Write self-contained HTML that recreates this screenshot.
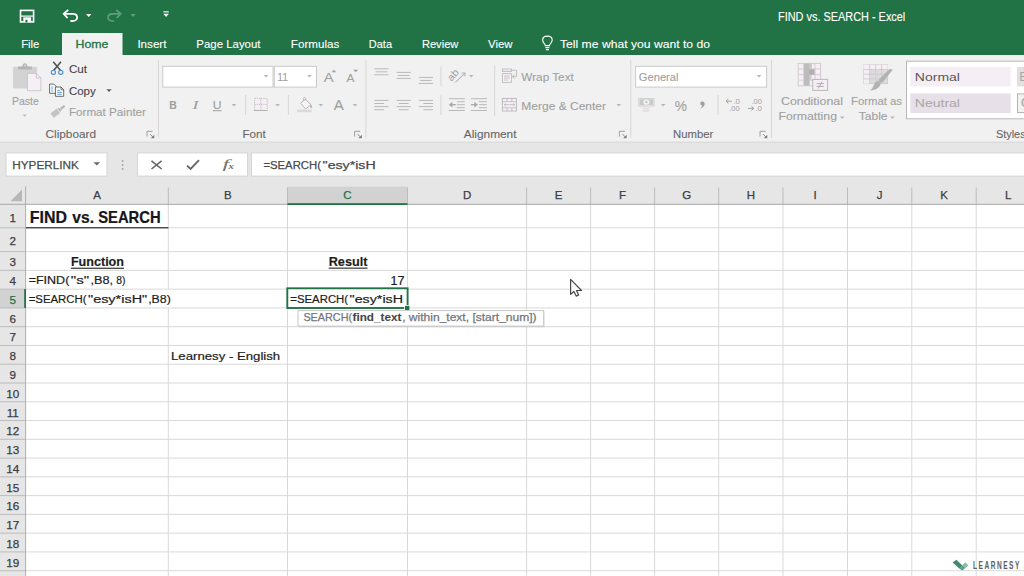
<!DOCTYPE html>
<html lang="en">
<head>
<meta charset="utf-8">
<title>FIND vs. SEARCH - Excel</title>
<style>
html,body{margin:0;padding:0;background:#fff;overflow:hidden}
body{width:1024px;height:576px;position:relative;font-family:"Liberation Sans", sans-serif;}
.layer{position:absolute;left:0;display:block;overflow:hidden}
svg text{font-family:"Liberation Sans", sans-serif;white-space:pre}
#titlebar{top:0;width:1024px;height:55px;background:#217346}
#ribbon{top:55px;width:1024px;height:88px;background:#f1f1f1}
#formulabar{top:143px;width:1024px;height:43px;background:#e6e6e6}
#sheet{top:186px;width:1024px;height:390px;background:#fff}
</style>
</head>
<body>
<div id="titlebar" class="layer">
<svg width="1024" height="55" viewBox="0 0 1024 55">
<rect x="62" y="33" width="60.5" height="23" fill="#f1f1f1"/>
<g fill="none" stroke="#ffffff" stroke-width="1.6"><rect x="20.5" y="10.4" width="13.1" height="11.5"/><path d="M20.5 16.1 H33.6" stroke-width="1.2"/></g><rect x="23.3" y="17.3" width="7.8" height="4.6" fill="#ffffff"/><rect x="25.4" y="19.8" width="2" height="2.6" fill="#217346"/>
<path d="M68.2 9.9 L63.7 13.9 L67.6 18 M64.2 13.9 H72.6 C78.6 13.9 78.8 21 72.6 21 H70.4" fill="none" stroke="#ffffff" stroke-width="1.8" stroke-linejoin="miter"/>
<path d="M86 14.1 H91.4 L88.7 17 Z" fill="#ffffff"/>
<path d="M116.2 9.9 L120.7 13.9 L116.8 18 M120.2 13.9 H112.6 C106.6 13.9 106.4 21 112.6 21 H114.2" fill="none" stroke="#5f9f7f" stroke-width="1.7"/>
<path d="M130.4 14.1 H135.7 L133.05 17 Z" fill="#5f9f7f"/>
<rect x="163.4" y="11.3" width="5.4" height="1.1" fill="#ffffff"/><path d="M163.3 13.8 H168.9 L166.1 17 Z" fill="#ffffff"/>
<text x="778" y="20.7" font-size="12.1" fill="#ffffff" font-weight="normal" stroke="#ffffff" stroke-width="0.1" font-style="normal" textLength="127.3" lengthAdjust="spacingAndGlyphs" >FIND vs. SEARCH - Excel</text>
<text x="21.2" y="47.8" font-size="11.8" fill="#ffffff" font-weight="normal" stroke="#ffffff" stroke-width="0.1" font-style="normal" textLength="18.2" lengthAdjust="spacingAndGlyphs" >File</text>
<text x="75.5" y="47.8" font-size="11.8" fill="#217346" font-weight="normal" stroke="#217346" stroke-width="0.3" font-style="normal" textLength="32.9" lengthAdjust="spacingAndGlyphs" >Home</text>
<text x="137.4" y="47.8" font-size="11.8" fill="#ffffff" font-weight="normal" stroke="#ffffff" stroke-width="0.1" font-style="normal" textLength="29.1" lengthAdjust="spacingAndGlyphs" >Insert</text>
<text x="196.3" y="47.8" font-size="11.8" fill="#ffffff" font-weight="normal" stroke="#ffffff" stroke-width="0.1" font-style="normal" textLength="64.2" lengthAdjust="spacingAndGlyphs" >Page Layout</text>
<text x="290.8" y="47.8" font-size="11.8" fill="#ffffff" font-weight="normal" stroke="#ffffff" stroke-width="0.1" font-style="normal" textLength="48.5" lengthAdjust="spacingAndGlyphs" >Formulas</text>
<text x="368.8" y="47.8" font-size="11.8" fill="#ffffff" font-weight="normal" stroke="#ffffff" stroke-width="0.1" font-style="normal" textLength="23.2" lengthAdjust="spacingAndGlyphs" >Data</text>
<text x="421.9" y="47.8" font-size="11.8" fill="#ffffff" font-weight="normal" stroke="#ffffff" stroke-width="0.1" font-style="normal" textLength="36.5" lengthAdjust="spacingAndGlyphs" >Review</text>
<text x="488" y="47.8" font-size="11.8" fill="#ffffff" font-weight="normal" stroke="#ffffff" stroke-width="0.1" font-style="normal" textLength="24.5" lengthAdjust="spacingAndGlyphs" >View</text>
<text x="560" y="47.8" font-size="11.8" fill="#ffffff" font-weight="normal" stroke="#ffffff" stroke-width="0.1" font-style="normal" textLength="150" lengthAdjust="spacingAndGlyphs" >Tell me what you want to do</text>
<g fill="none" stroke="#ffffff" stroke-width="1.1"><path d="M545.3 45.6 C545.3 43.6 542.6 42.8 542.6 40.1 C542.6 37.6 544.7 36.1 547.4 36.1 C550.1 36.1 552.2 37.6 552.2 40.1 C552.2 42.8 549.5 43.6 549.5 45.6 Z"/><path d="M545.4 47.6 H549.4 M545.9 49.6 H548.9"/></g>
</svg>
</div>
<div id="ribbon" class="layer">
<svg width="1024" height="88" viewBox="0 55 1024 88">
<rect x="0" y="141.6" width="1024" height="1.4" fill="#dcdcdc"/>
<rect x="157.9" y="59.7" width="1" height="78" fill="#d6d6d6"/>
<rect x="365.4" y="59.7" width="1" height="78" fill="#d6d6d6"/>
<rect x="630.3" y="59.7" width="1" height="78" fill="#d6d6d6"/>
<rect x="771.0" y="59.7" width="1" height="78" fill="#d6d6d6"/>
<rect x="245.1" y="95" width="1" height="20" fill="#d6d6d6"/>
<rect x="287.9" y="95" width="1" height="20" fill="#d6d6d6"/>
<rect x="440.4" y="66.2" width="1" height="19.799999999999997" fill="#d6d6d6"/>
<rect x="440.4" y="95.3" width="1" height="19.700000000000003" fill="#d6d6d6"/>
<rect x="494.2" y="65.3" width="1" height="50.7" fill="#d6d6d6"/>
<rect x="717.5" y="95" width="1" height="20" fill="#d6d6d6"/>
<rect x="13.1" y="66.8" width="24" height="21.8" rx="0.8" fill="#d3d3d3"/>
<path d="M18 69.6 V66.6 H22.4 C22.4 62.2 27.4 62.2 27.4 66.6 H31.8 V69.6 Z" fill="#b4b4b4"/><circle cx="24.9" cy="65.6" r="1" fill="#dcdcdc"/>
<path d="M27.4 73.4 H36.3 L40.9 78 V90.7 H27.4 Z" fill="#f6eff6" stroke="#c9c3c9" stroke-width="0.9"/><path d="M36.3 73.4 V78 H40.9" fill="none" stroke="#c9c3c9" stroke-width="0.9"/>
<text x="12" y="105" font-size="11.5" fill="#a0a0a0" font-weight="normal" stroke="#a0a0a0" stroke-width="0.1" font-style="normal" textLength="26.8" lengthAdjust="spacingAndGlyphs" >Paste</text>
<path d="M22.4 114.6 H26.8 L24.6 116.8 Z" fill="#b8b8b8"/>
<path d="M53.2 61.8 L60.6 70.6 M61 61.8 L53.6 70.6" stroke="#505050" stroke-width="1.5" fill="none"/>
<circle cx="53.4" cy="72.3" r="2.1" fill="none" stroke="#4a8ad0" stroke-width="1.1"/><circle cx="60.8" cy="72.3" r="2.1" fill="none" stroke="#4a8ad0" stroke-width="1.1"/>
<text x="68.9" y="72.9" font-size="11.5" fill="#444444" font-weight="normal" stroke="#444444" stroke-width="0.1" font-style="normal" textLength="18.1" lengthAdjust="spacingAndGlyphs" >Cut</text>
<path d="M49.6 84.1 H53.8 L56 86.3 V93.3 H49.6 Z" fill="#fff" stroke="#5a5a5a" stroke-width="0.9"/>
<path d="M51.2 87 H53.2 M51.2 89 H53.2 M51.2 91 H53.2" stroke="#4a8ad0" stroke-width="0.8"/>
<path d="M55.4 87 H61 L63.7 89.7 V96.3 H55.4 Z" fill="#fff" stroke="#5a5a5a" stroke-width="0.9"/><path d="M61 87 V89.7 H63.7" fill="none" stroke="#5a5a5a" stroke-width="0.8"/>
<path d="M57.2 90.6 H60 M57.2 92.4 H62 M57.2 94.2 H62" stroke="#4a8ad0" stroke-width="0.8"/>
<text x="68.9" y="94.7" font-size="11.5" fill="#444444" font-weight="normal" stroke="#444444" stroke-width="0.1" font-style="normal" textLength="26.8" lengthAdjust="spacingAndGlyphs" >Copy</text>
<path d="M106.4 89.2 H111.6 L109 92 Z" fill="#5a5a5a"/>
<g transform="rotate(-38 57.5 111.3)" fill="#c4c4c4"><rect x="50.6" y="108.6" width="8" height="5.6"/><rect x="59.3" y="109.4" width="1.6" height="4" fill="#b0b0b0"/><rect x="61.4" y="110.2" width="5" height="2.4" fill="#b8b8b8"/></g>
<text x="68.9" y="116.2" font-size="11.5" fill="#a0a0a0" font-weight="normal" stroke="#a0a0a0" stroke-width="0.1" font-style="normal" textLength="77.1" lengthAdjust="spacingAndGlyphs" >Format Painter</text>
<text x="45.5" y="137.7" font-size="11.5" fill="#666666" font-weight="normal" stroke="#666666" stroke-width="0.1" font-style="normal" textLength="50.5" lengthAdjust="spacingAndGlyphs" >Clipboard</text>
<path d="M147 136.60000000000002 V131.3 H152.6" fill="none" stroke="#a0a0a0" stroke-width="1"/><path d="M150 134.10000000000002 L153 137.10000000000002" fill="none" stroke="#8a8a8a" stroke-width="1"/><path d="M154.3 134.70000000000002 V138.3 H150.7 Z" fill="#808080"/>
<rect x="162.8" y="66.3" width="110.2" height="20.8" fill="#fff" stroke="#cacaca" stroke-width="1"/>
<rect x="274.3" y="66.3" width="42.2" height="20.8" fill="#fff" stroke="#cacaca" stroke-width="1"/>
<path d="M263.7 75 H268.3 L266 77.4 Z" fill="#b8b8b8"/>
<path d="M307.1 75 H311.7 L309.4 77.4 Z" fill="#b8b8b8"/>
<text x="277.2" y="81" font-size="11.5" fill="#a0a0a0" font-weight="normal" stroke="#a0a0a0" stroke-width="0.1" font-style="normal" textLength="10.8" lengthAdjust="spacingAndGlyphs" >11</text>
<text x="323.8" y="82" font-size="13.6" fill="#a0a0a0" font-weight="normal" stroke="#a0a0a0" stroke-width="0.1" font-style="normal" textLength="9.8" lengthAdjust="spacingAndGlyphs" >A</text>
<path d="M331.6 72.3 L333.9 69.7 L336.2 72.3 Z" fill="#a0a0a0"/>
<text x="346.5" y="82" font-size="11.4" fill="#a0a0a0" font-weight="normal" stroke="#a0a0a0" stroke-width="0.1" font-style="normal" textLength="7.9" lengthAdjust="spacingAndGlyphs" >A</text>
<path d="M353.2 69.7 H358.2 L355.7 72.3 Z" fill="#a0a0a0"/>
<text x="169.3" y="109" font-size="11.8" fill="#a0a0a0" font-weight="bold" stroke="#a0a0a0" stroke-width="0.1" font-style="normal" textLength="7.5" lengthAdjust="spacingAndGlyphs" >B</text>
<text x="192.2" y="109" font-size="12.4" fill="#a0a0a0" font-style="italic" style="font-family:Liberation Serif,serif" textLength="6.4" lengthAdjust="spacingAndGlyphs">I</text>
<text x="212.8" y="109" font-size="11.8" fill="#a0a0a0" font-weight="normal" stroke="#a0a0a0" stroke-width="0.1" font-style="normal" textLength="8.8" lengthAdjust="spacingAndGlyphs" >U</text>
<rect x="212.8" y="110.2" width="8.8" height="1" fill="#a0a0a0"/>
<path d="M231.6 104 H236.4 L234.0 106.5 Z" fill="#b8b8b8"/>
<rect x="254.6" y="98.4" width="12.6" height="12" fill="#f6eff6" stroke="#bdb7bd" stroke-width="0.9" stroke-dasharray="1.2 1"/>
<path d="M260.9 98.4 V110.4 M254.6 104.4 H267.2" stroke="#bdb7bd" stroke-width="0.9" stroke-dasharray="1.2 1"/>
<rect x="253.8" y="110" width="13.8" height="1" fill="#b4b4b4"/>
<path d="M275.2 104 H280.0 L277.59999999999997 106.5 Z" fill="#b8b8b8"/>
<path d="M300.6 103.2 L305.2 99.2 L311 104.6 L305.6 109 Z" fill="#f8f4f8" stroke="#b9b9b9" stroke-width="1"/>
<path d="M303.4 101 V98.4 C303.4 97.2 305.6 97.2 305.6 98.4 V100.4" fill="none" stroke="#b9b9b9" stroke-width="0.9"/>
<path d="M310.6 104 C312.6 106 312.6 108.2 311.2 108.2 C309.8 108.2 309.8 106 310.6 104 Z" fill="#b9b9b9"/>
<rect x="297.2" y="109.6" width="14.4" height="2.6" fill="#dcd8dc"/>
<path d="M318.4 104 H323.2 L320.79999999999995 106.5 Z" fill="#b8b8b8"/>
<text x="333.8" y="109.7" font-size="14.6" fill="#a0a0a0" font-weight="normal" stroke="#a0a0a0" stroke-width="0.1" font-style="normal" textLength="10.0" lengthAdjust="spacingAndGlyphs" >A</text>
<path d="M352.6 104 H357.40000000000003 L355.0 106.5 Z" fill="#b8b8b8"/>
<text x="242.4" y="137.5" font-size="11.5" fill="#666666" font-weight="normal" stroke="#666666" stroke-width="0.1" font-style="normal" textLength="23.3" lengthAdjust="spacingAndGlyphs" >Font</text>
<path d="M354.6 136.60000000000002 V131.3 H360.20000000000005" fill="none" stroke="#a0a0a0" stroke-width="1"/><path d="M357.6 134.10000000000002 L360.6 137.10000000000002" fill="none" stroke="#8a8a8a" stroke-width="1"/><path d="M361.90000000000003 134.70000000000002 V138.3 H358.3 Z" fill="#808080"/>
<rect x="374.3" y="68.3" width="14.2" height="1" fill="#b9b9b9"/><rect x="375.6" y="71.3" width="11.6" height="1" fill="#b9b9b9"/><rect x="374.3" y="74.3" width="14.2" height="1" fill="#b9b9b9"/>
<rect x="396.6" y="71.9" width="14.2" height="1" fill="#b9b9b9"/><rect x="397.9" y="74.9" width="11.6" height="1" fill="#b9b9b9"/><rect x="396.6" y="77.9" width="14.2" height="1" fill="#b9b9b9"/>
<rect x="418.8" y="76.9" width="14.2" height="1" fill="#b9b9b9"/><rect x="420.1" y="79.9" width="11.6" height="1" fill="#b9b9b9"/><rect x="418.8" y="82.9" width="14.2" height="1" fill="#b9b9b9"/>
<rect x="374.3" y="99.9" width="14.2" height="1" fill="#b9b9b9"/><rect x="374.3" y="103.0" width="9.6" height="1" fill="#b9b9b9"/><rect x="374.3" y="106.1" width="14.2" height="1" fill="#b9b9b9"/><rect x="374.3" y="109.2" width="9.6" height="1" fill="#b9b9b9"/>
<rect x="396.6" y="99.9" width="14.2" height="1" fill="#b9b9b9"/><rect x="398.9" y="103.0" width="9.6" height="1" fill="#b9b9b9"/><rect x="396.6" y="106.1" width="14.2" height="1" fill="#b9b9b9"/><rect x="398.9" y="109.2" width="9.6" height="1" fill="#b9b9b9"/>
<rect x="418.8" y="99.9" width="14.2" height="1" fill="#b9b9b9"/><rect x="423.4" y="103.0" width="9.6" height="1" fill="#b9b9b9"/><rect x="418.8" y="106.1" width="14.2" height="1" fill="#b9b9b9"/><rect x="423.4" y="109.2" width="9.6" height="1" fill="#b9b9b9"/>
<g transform="rotate(-48 454 75)"><text x="447.4" y="77.6" font-size="10" fill="#a0a0a0" textLength="12" lengthAdjust="spacingAndGlyphs">ab</text></g>
<path d="M455.4 82.4 L464.4 73.6 M461.4 73 L465 73 L465 76.6" fill="none" stroke="#b9b9b9" stroke-width="1.2"/>
<path d="M468.9 75 H473.7 L471.29999999999995 77.5 Z" fill="#b8b8b8"/>
<rect x="448.8" y="98.2" width="16" height="1" fill="#b9b9b9"/><rect x="448.8" y="110" width="16" height="1" fill="#b9b9b9"/><rect x="456.8" y="101.2" width="8" height="1" fill="#b9b9b9"/><rect x="456.8" y="104.2" width="8" height="1" fill="#b9b9b9"/><rect x="456.8" y="107.2" width="8" height="1" fill="#b9b9b9"/><path d="M450.8 104.7 H455.8 " fill="none" stroke="#a8a8a8" stroke-width="1.3"/><path d="M452.40000000000003 101.8 L448.8 104.7 L452.40000000000003 107.6 Z" fill="#a8a8a8"/>
<rect x="470.9" y="98.2" width="16" height="1" fill="#b9b9b9"/><rect x="470.9" y="110" width="16" height="1" fill="#b9b9b9"/><rect x="478.9" y="101.2" width="8" height="1" fill="#b9b9b9"/><rect x="478.9" y="104.2" width="8" height="1" fill="#b9b9b9"/><rect x="478.9" y="107.2" width="8" height="1" fill="#b9b9b9"/><path d="M470.9 104.7 H475.9 " fill="none" stroke="#a8a8a8" stroke-width="1.3"/><path d="M474.29999999999995 101.8 L477.9 104.7 L474.29999999999995 107.6 Z" fill="#a8a8a8"/>
<rect x="502.4" y="69" width="9" height="2.6" fill="#eee8ee" stroke="#b9b9b9" stroke-width="0.8"/>
<rect x="502.4" y="73.6" width="9" height="8.8" fill="#f6eff6" stroke="#b9b9b9" stroke-width="0.8"/>
<path d="M504 76 H509.8 M504 78 H509.8 M504 80 H508" stroke="#b9b9b9" stroke-width="0.8"/>
<path d="M511.4 70.3 H516.6 V76.6 H512.4 M514.4 74.6 L512.2 76.6 L514.4 78.6" fill="none" stroke="#b9b9b9" stroke-width="0.9"/>
<text x="521.3" y="80.9" font-size="11.5" fill="#a0a0a0" font-weight="normal" stroke="#a0a0a0" stroke-width="0.1" font-style="normal" textLength="52.5" lengthAdjust="spacingAndGlyphs" >Wrap Text</text>
<rect x="502.4" y="98.4" width="14" height="12.6" fill="#f6eff6" stroke="#b9b9b9" stroke-width="0.9"/>
<path d="M502.4 101.6 H516.4 M502.4 107.8 H516.4 M507 98.4 V101.6 M511.8 98.4 V101.6 M507 107.8 V111 M511.8 107.8 V111" stroke="#b9b9b9" stroke-width="0.8" fill="none"/>
<path d="M504.4 104.7 H514.4 M505.8 103.4 L504.2 104.7 L505.8 106 M513 103.4 L514.6 104.7 L513 106" stroke="#b9b9b9" stroke-width="0.8" fill="none"/>
<text x="521.3" y="109.7" font-size="11.5" fill="#a0a0a0" font-weight="normal" stroke="#a0a0a0" stroke-width="0.1" font-style="normal" textLength="84.7" lengthAdjust="spacingAndGlyphs" >Merge &amp; Center</text>
<path d="M616.4 104 H621.1999999999999 L618.8 106.5 Z" fill="#b8b8b8"/>
<text x="463.8" y="137.5" font-size="11.5" fill="#666666" font-weight="normal" stroke="#666666" stroke-width="0.1" font-style="normal" textLength="52.7" lengthAdjust="spacingAndGlyphs" >Alignment</text>
<path d="M619.4 136.60000000000002 V131.3 H625.0" fill="none" stroke="#a0a0a0" stroke-width="1"/><path d="M622.4 134.10000000000002 L625.4 137.10000000000002" fill="none" stroke="#8a8a8a" stroke-width="1"/><path d="M626.6999999999999 134.70000000000002 V138.3 H623.1 Z" fill="#808080"/>
<rect x="635.6" y="66.3" width="131" height="20.8" fill="#fff" stroke="#cacaca" stroke-width="1"/>
<text x="638.8" y="81" font-size="11.5" fill="#a0a0a0" font-weight="normal" stroke="#a0a0a0" stroke-width="0.1" font-style="normal" textLength="39.7" lengthAdjust="spacingAndGlyphs" >General</text>
<path d="M756.6 75 H761.4 L759 77.4 Z" fill="#b8b8b8"/>
<rect x="638.4" y="98" width="16" height="8.4" fill="#c9c9c9"/><ellipse cx="646.4" cy="102.2" rx="3" ry="2.6" fill="#f1f1f1"/><circle cx="646.4" cy="102.2" r="1.1" fill="#c0c0c0"/>
<rect x="639.4" y="99" width="14" height="6.4" fill="none" stroke="#f1f1f1" stroke-width="0.5"/>
<ellipse cx="649" cy="106" rx="4.4" ry="1.3" fill="#e4dfe4"/><ellipse cx="646" cy="108.4" rx="3.6" ry="1.2" fill="#e6e1e6"/><ellipse cx="646" cy="110.8" rx="3.6" ry="1.2" fill="#e6e1e6"/>
<path d="M660.8 104 H665.5999999999999 L663.1999999999999 106.5 Z" fill="#b8b8b8"/>
<text x="674.8" y="111" font-size="14.6" fill="#a0a0a0" font-weight="normal" stroke="#a0a0a0" stroke-width="0.1" font-style="normal" textLength="12.2" lengthAdjust="spacingAndGlyphs" >%</text>
<path d="M701.2 101.8 C703.2 101 705 102.2 704.6 104.4 C704.2 106.4 702.4 107.8 700 108.6 C701.6 107.4 702.4 106.4 702.2 105.6 C700.2 105.4 699.6 102.6 701.2 101.8 Z" fill="#a0a0a0"/>
<text x="733.2" y="104" font-size="7.6" fill="#a0a0a0" textLength="6.6" lengthAdjust="spacingAndGlyphs">.0</text><text x="729.2" y="111" font-size="7.6" fill="#a0a0a0" textLength="10.4" lengthAdjust="spacingAndGlyphs">.00</text><path d="M726.2 101.2 H731.8 M728.4 99 L726 101.2 L728.4 103.4" fill="none" stroke="#a0a0a0" stroke-width="1"/>
<text x="751.4" y="104" font-size="7.6" fill="#a0a0a0" textLength="10.4" lengthAdjust="spacingAndGlyphs">.00</text><text x="755.4" y="111" font-size="7.6" fill="#a0a0a0" textLength="6.6" lengthAdjust="spacingAndGlyphs">.0</text><path d="M748 108.4 H753.6 M751.4 106.2 L753.8 108.4 L751.4 110.6" fill="none" stroke="#a0a0a0" stroke-width="1"/>
<text x="673" y="137.5" font-size="11.5" fill="#666666" font-weight="normal" stroke="#666666" stroke-width="0.1" font-style="normal" textLength="40.4" lengthAdjust="spacingAndGlyphs" >Number</text>
<path d="M760 136.60000000000002 V131.3 H765.6" fill="none" stroke="#a0a0a0" stroke-width="1"/><path d="M763 134.10000000000002 L766 137.10000000000002" fill="none" stroke="#8a8a8a" stroke-width="1"/><path d="M767.3 134.70000000000002 V138.3 H763.7 Z" fill="#808080"/>
<rect x="798.2" y="63.4" width="22.4" height="22.4" fill="#f6eff6" stroke="#cfc9cf" stroke-width="0.9"/><path d="M803.8000000000001 63.4 V85.8 M798.2 69.0 H820.6" stroke="#cfc9cf" stroke-width="0.9"/><path d="M809.4000000000001 63.4 V85.8 M798.2 74.6 H820.6" stroke="#cfc9cf" stroke-width="0.9"/><path d="M815.0 63.4 V85.8 M798.2 80.19999999999999 H820.6" stroke="#cfc9cf" stroke-width="0.9"/><rect x="804" y="63.6" width="5.2" height="22" fill="#bcbcbc"/><rect x="809" y="69.2" width="5.6" height="5.4" fill="#b0b0b0"/><rect x="809" y="63.6" width="3" height="5.4" fill="#c9c9c9"/><rect x="809" y="74.8" width="2.4" height="5.4" fill="#c9c9c9"/><rect x="812.8" y="79.4" width="14.8" height="11" fill="#f6eff6" stroke="#b9b9b9" stroke-width="1"/><path d="M816.6 83.6 H823.8 M816.6 86.4 H823.8 M822 81.6 L818.4 88.4" stroke="#a8a8a8" stroke-width="0.9" fill="none"/>
<text x="781" y="105.2" font-size="11.5" fill="#a0a0a0" font-weight="normal" stroke="#a0a0a0" stroke-width="0.1" font-style="normal" textLength="62" lengthAdjust="spacingAndGlyphs" >Conditional</text>
<text x="778.4" y="120" font-size="11.5" fill="#a0a0a0" font-weight="normal" stroke="#a0a0a0" stroke-width="0.1" font-style="normal" textLength="58.6" lengthAdjust="spacingAndGlyphs" >Formatting</text>
<path d="M839.8 116.6 H844.5999999999999 L842.1999999999999 119.1 Z" fill="#b8b8b8"/>
<rect x="863.6" y="64.8" width="24" height="18.8" fill="#dcdcdc" stroke="#cfc9cf" stroke-width="0.9"/><rect x="863.6" y="64.8" width="6" height="18.8" fill="#f6eff6"/><rect x="863.6" y="64.8" width="24" height="4.6" fill="#f6eff6"/><path d="M869.6 64.8 V83.6" stroke="#cfc9cf" stroke-width="0.9"/><path d="M875.6 64.8 V83.6" stroke="#cfc9cf" stroke-width="0.9"/><path d="M881.6 64.8 V83.6" stroke="#cfc9cf" stroke-width="0.9"/><path d="M863.6 69.5 H887.6" stroke="#cfc9cf" stroke-width="0.9"/><path d="M863.6 74.2 H887.6" stroke="#cfc9cf" stroke-width="0.9"/><path d="M863.6 78.9 H887.6" stroke="#cfc9cf" stroke-width="0.9"/><path d="M893 69.6 L882 83 L878.2 80.2 L889.4 69 Z" fill="#b2b2b2"/><path d="M880.8 83 C880.4 87.4 875.6 90.6 870 90.4 C873.2 88.4 873.2 85.4 875.6 82 C877.4 80 881 81 880.8 83 Z" fill="#b2b2b2"/>
<text x="851" y="105.2" font-size="11.5" fill="#a0a0a0" font-weight="normal" stroke="#a0a0a0" stroke-width="0.1" font-style="normal" textLength="51" lengthAdjust="spacingAndGlyphs" >Format as</text>
<text x="858.8" y="120" font-size="11.5" fill="#a0a0a0" font-weight="normal" stroke="#a0a0a0" stroke-width="0.1" font-style="normal" textLength="28.7" lengthAdjust="spacingAndGlyphs" >Table</text>
<path d="M890 116.6 H894.8 L892.4 119.1 Z" fill="#b8b8b8"/>
<rect x="906.5" y="61.2" width="130" height="57.6" fill="#fff" stroke="#b8b8b8" stroke-width="1"/>
<rect x="910.3" y="67" width="100.4" height="19.4" fill="#f5eef5"/>
<rect x="910.3" y="93.4" width="100.4" height="19.6" fill="#e8e0e8"/>
<rect x="1017" y="67" width="12" height="19.4" fill="#e2dfe2"/>
<rect x="1017.5" y="93.9" width="12" height="18.6" fill="#f2f2f2" stroke="#b4b4b4" stroke-width="1"/>
<text x="914.8" y="80.6" font-size="11.2" fill="#585858" font-weight="normal" font-style="normal" textLength="45.2" lengthAdjust="spacingAndGlyphs" >Normal</text>
<text x="914.8" y="107" font-size="11.2" fill="#a6a6a6" font-weight="normal" font-style="normal" textLength="45.2" lengthAdjust="spacingAndGlyphs" >Neutral</text>
<text x="1019.6" y="80.6" font-size="12" fill="#a8a8a8" font-weight="normal" stroke="#a8a8a8" stroke-width="0.1" font-style="normal" textLength="7.4" lengthAdjust="spacingAndGlyphs" >B</text>
<text x="1021" y="107" font-size="12" fill="#b0b0b0" font-weight="bold" stroke="#b0b0b0" stroke-width="0.1" font-style="normal" textLength="8" lengthAdjust="spacingAndGlyphs" >C</text>
<text x="996" y="137.7" font-size="11.5" fill="#666666" font-weight="normal" stroke="#666666" stroke-width="0.1" font-style="normal" textLength="29.6" lengthAdjust="spacingAndGlyphs" >Styles</text>
</svg>
</div>
<div id="formulabar" class="layer">
<svg width="1024" height="43" viewBox="0 143 1024 43">
<rect x="6" y="152.9" width="101" height="23.2" fill="#fff" stroke="#d4d4d4" stroke-width="1"/>
<text x="12.3" y="169" font-size="11.7" fill="#4a4a4a" font-weight="normal" stroke="#4a4a4a" stroke-width="0.25" font-style="normal" textLength="66.5" lengthAdjust="spacingAndGlyphs" >HYPERLINK</text>
<path d="M93.4 162.2 H100.2 L96.8 165.6 Z" fill="#6a6a6a"/>
<rect x="121.8" y="160.3" width="1.6" height="1.6" fill="#9c9c9c"/>
<rect x="121.8" y="164.2" width="1.6" height="1.6" fill="#9c9c9c"/>
<rect x="121.8" y="168.1" width="1.6" height="1.6" fill="#9c9c9c"/>
<rect x="137.6" y="152.9" width="110" height="23.2" fill="#fff" stroke="#d4d4d4" stroke-width="1"/>
<path d="M151.5 160.9 L161.6 169 M161.6 160.9 L151.5 169" stroke="#666" stroke-width="1.6" fill="none"/>
<path d="M187 165.6 L190.6 169 L199 160.2" stroke="#666" stroke-width="1.9" fill="none"/>
<text x="222.6" y="168.4" font-size="13.4" fill="#707070" font-style="italic" style="font-family:Liberation Serif,serif" textLength="6.8" lengthAdjust="spacingAndGlyphs">f</text>
<text x="228.6" y="169.4" font-size="8.4" fill="#707070" font-style="italic" font-weight="bold" style="font-family:Liberation Serif,serif" textLength="5.4" lengthAdjust="spacingAndGlyphs">x</text>
<rect x="251.5" y="152.9" width="790" height="23.2" fill="#fff" stroke="#d4d4d4" stroke-width="1"/>
<text x="263.4" y="169.2" font-size="11.7" fill="#48484e" font-weight="normal" stroke="#48484e" stroke-width="0.25" font-style="normal" textLength="57.6" lengthAdjust="spacingAndGlyphs" >=SEARCH(</text>
<text x="322.6" y="169.2" font-size="11.7" fill="#48484e" font-weight="normal" stroke="#48484e" stroke-width="0.25" font-style="normal" textLength="53.1" lengthAdjust="spacingAndGlyphs" >&quot;esy*isH</text>
</svg>
</div>
<div id="sheet" class="layer">
<svg width="1024" height="390" viewBox="0 186 1024 390">
<rect x="0" y="186" width="1024" height="18.4" fill="#e6e6e6"/>
<rect x="0" y="186" width="25.6" height="390" fill="#e6e6e6"/>
<rect x="287.5" y="186.6" width="120" height="17.6" fill="#d2d2d2"/>
<rect x="0" y="289.14" width="25.4" height="18.77000000000004" fill="#d2d2d2"/>
<rect x="167.8" y="205" width="1" height="371" fill="#d9d9d9"/>
<rect x="167.8" y="187.5" width="1" height="17" fill="#bcbcbc"/>
<rect x="287.0" y="205" width="1" height="371" fill="#d9d9d9"/>
<rect x="287.0" y="187.5" width="1" height="17" fill="#bcbcbc"/>
<rect x="407.0" y="205" width="1" height="371" fill="#d9d9d9"/>
<rect x="407.0" y="187.5" width="1" height="17" fill="#bcbcbc"/>
<rect x="526.1" y="205" width="1" height="371" fill="#d9d9d9"/>
<rect x="526.1" y="187.5" width="1" height="17" fill="#bcbcbc"/>
<rect x="590.1" y="205" width="1" height="371" fill="#d9d9d9"/>
<rect x="590.1" y="187.5" width="1" height="17" fill="#bcbcbc"/>
<rect x="654.1" y="205" width="1" height="371" fill="#d9d9d9"/>
<rect x="654.1" y="187.5" width="1" height="17" fill="#bcbcbc"/>
<rect x="718.2" y="205" width="1" height="371" fill="#d9d9d9"/>
<rect x="718.2" y="187.5" width="1" height="17" fill="#bcbcbc"/>
<rect x="782.5" y="205" width="1" height="371" fill="#d9d9d9"/>
<rect x="782.5" y="187.5" width="1" height="17" fill="#bcbcbc"/>
<rect x="847.0" y="205" width="1" height="371" fill="#d9d9d9"/>
<rect x="847.0" y="187.5" width="1" height="17" fill="#bcbcbc"/>
<rect x="911.3" y="205" width="1" height="371" fill="#d9d9d9"/>
<rect x="911.3" y="187.5" width="1" height="17" fill="#bcbcbc"/>
<rect x="975.7" y="205" width="1" height="371" fill="#d9d9d9"/>
<rect x="975.7" y="187.5" width="1" height="17" fill="#bcbcbc"/>
<rect x="1039.9" y="205" width="1" height="371" fill="#d9d9d9"/>
<rect x="1039.9" y="187.5" width="1" height="17" fill="#bcbcbc"/>
<rect x="26" y="227.3" width="998" height="1" fill="#d9d9d9"/>
<rect x="0" y="227.3" width="25.6" height="1" fill="#bcbcbc"/>
<rect x="26" y="251.1" width="998" height="1" fill="#d9d9d9"/>
<rect x="0" y="251.1" width="25.6" height="1" fill="#bcbcbc"/>
<rect x="26" y="269.87" width="998" height="1" fill="#d9d9d9"/>
<rect x="0" y="269.87" width="25.6" height="1" fill="#bcbcbc"/>
<rect x="26" y="288.64" width="998" height="1" fill="#d9d9d9"/>
<rect x="0" y="288.64" width="25.6" height="1" fill="#bcbcbc"/>
<rect x="26" y="307.41" width="998" height="1" fill="#d9d9d9"/>
<rect x="0" y="307.41" width="25.6" height="1" fill="#bcbcbc"/>
<rect x="26" y="326.18" width="998" height="1" fill="#d9d9d9"/>
<rect x="0" y="326.18" width="25.6" height="1" fill="#bcbcbc"/>
<rect x="26" y="344.95" width="998" height="1" fill="#d9d9d9"/>
<rect x="0" y="344.95" width="25.6" height="1" fill="#bcbcbc"/>
<rect x="26" y="363.72" width="998" height="1" fill="#d9d9d9"/>
<rect x="0" y="363.72" width="25.6" height="1" fill="#bcbcbc"/>
<rect x="26" y="382.49" width="998" height="1" fill="#d9d9d9"/>
<rect x="0" y="382.49" width="25.6" height="1" fill="#bcbcbc"/>
<rect x="26" y="401.26" width="998" height="1" fill="#d9d9d9"/>
<rect x="0" y="401.26" width="25.6" height="1" fill="#bcbcbc"/>
<rect x="26" y="420.03" width="998" height="1" fill="#d9d9d9"/>
<rect x="0" y="420.03" width="25.6" height="1" fill="#bcbcbc"/>
<rect x="26" y="438.8" width="998" height="1" fill="#d9d9d9"/>
<rect x="0" y="438.8" width="25.6" height="1" fill="#bcbcbc"/>
<rect x="26" y="457.57" width="998" height="1" fill="#d9d9d9"/>
<rect x="0" y="457.57" width="25.6" height="1" fill="#bcbcbc"/>
<rect x="26" y="476.34" width="998" height="1" fill="#d9d9d9"/>
<rect x="0" y="476.34" width="25.6" height="1" fill="#bcbcbc"/>
<rect x="26" y="495.11" width="998" height="1" fill="#d9d9d9"/>
<rect x="0" y="495.11" width="25.6" height="1" fill="#bcbcbc"/>
<rect x="26" y="513.88" width="998" height="1" fill="#d9d9d9"/>
<rect x="0" y="513.88" width="25.6" height="1" fill="#bcbcbc"/>
<rect x="26" y="532.65" width="998" height="1" fill="#d9d9d9"/>
<rect x="0" y="532.65" width="25.6" height="1" fill="#bcbcbc"/>
<rect x="26" y="551.42" width="998" height="1" fill="#d9d9d9"/>
<rect x="0" y="551.42" width="25.6" height="1" fill="#bcbcbc"/>
<rect x="26" y="570.19" width="998" height="1" fill="#d9d9d9"/>
<rect x="0" y="570.19" width="25.6" height="1" fill="#bcbcbc"/>
<rect x="26" y="588.96" width="998" height="1" fill="#d9d9d9"/>
<rect x="0" y="588.96" width="25.6" height="1" fill="#bcbcbc"/>
<rect x="0" y="203.8" width="1024" height="1" fill="#a8a8a8"/>
<rect x="25.1" y="186.4" width="1" height="390" fill="#adadad"/>
<rect x="287.5" y="203.2" width="120" height="1.8" fill="#217346"/>
<rect x="24.2" y="289.14" width="1.8" height="18.77000000000004" fill="#217346"/>
<path d="M22 189.6 V201.2 H10.6 Z" fill="#b7b7b7"/>
<text x="97.0" y="199.4" font-size="11.5" fill="#3c3c42" font-weight="normal" stroke="#3c3c42" stroke-width="0.25" text-anchor="middle" >A</text>
<text x="227.9" y="199.4" font-size="11.5" fill="#3c3c42" font-weight="normal" stroke="#3c3c42" stroke-width="0.25" text-anchor="middle" >B</text>
<text x="347.5" y="199.4" font-size="11.5" fill="#217346" font-weight="normal" stroke="#217346" stroke-width="0.25" text-anchor="middle" >C</text>
<text x="467.1" y="199.4" font-size="11.5" fill="#3c3c42" font-weight="normal" stroke="#3c3c42" stroke-width="0.25" text-anchor="middle" >D</text>
<text x="558.6" y="199.4" font-size="11.5" fill="#3c3c42" font-weight="normal" stroke="#3c3c42" stroke-width="0.25" text-anchor="middle" >E</text>
<text x="622.6" y="199.4" font-size="11.5" fill="#3c3c42" font-weight="normal" stroke="#3c3c42" stroke-width="0.25" text-anchor="middle" >F</text>
<text x="686.7" y="199.4" font-size="11.5" fill="#3c3c42" font-weight="normal" stroke="#3c3c42" stroke-width="0.25" text-anchor="middle" >G</text>
<text x="750.9" y="199.4" font-size="11.5" fill="#3c3c42" font-weight="normal" stroke="#3c3c42" stroke-width="0.25" text-anchor="middle" >H</text>
<text x="815.2" y="199.4" font-size="11.5" fill="#3c3c42" font-weight="normal" stroke="#3c3c42" stroke-width="0.25" text-anchor="middle" >I</text>
<text x="879.6" y="199.4" font-size="11.5" fill="#3c3c42" font-weight="normal" stroke="#3c3c42" stroke-width="0.25" text-anchor="middle" >J</text>
<text x="944.0" y="199.4" font-size="11.5" fill="#3c3c42" font-weight="normal" stroke="#3c3c42" stroke-width="0.25" text-anchor="middle" >K</text>
<text x="1008.3" y="199.4" font-size="11.5" fill="#3c3c42" font-weight="normal" stroke="#3c3c42" stroke-width="0.25" text-anchor="middle" >L</text>
<text x="12.7" y="222.4" font-size="11.7" fill="#3c3c42" font-weight="normal" stroke="#3c3c42" stroke-width="0.25" text-anchor="middle" >1</text>
<text x="12.7" y="245.4" font-size="11.7" fill="#3c3c42" font-weight="normal" stroke="#3c3c42" stroke-width="0.25" text-anchor="middle" >2</text>
<text x="12.7" y="266.4" font-size="11.7" fill="#3c3c42" font-weight="normal" stroke="#3c3c42" stroke-width="0.25" text-anchor="middle" >3</text>
<text x="12.7" y="285.1" font-size="11.7" fill="#3c3c42" font-weight="normal" stroke="#3c3c42" stroke-width="0.25" text-anchor="middle" >4</text>
<text x="12.7" y="303.9" font-size="11.7" fill="#217346" font-weight="normal" stroke="#217346" stroke-width="0.25" text-anchor="middle" >5</text>
<text x="12.7" y="322.7" font-size="11.7" fill="#3c3c42" font-weight="normal" stroke="#3c3c42" stroke-width="0.25" text-anchor="middle" >6</text>
<text x="12.7" y="341.4" font-size="11.7" fill="#3c3c42" font-weight="normal" stroke="#3c3c42" stroke-width="0.25" text-anchor="middle" >7</text>
<text x="12.7" y="360.2" font-size="11.7" fill="#3c3c42" font-weight="normal" stroke="#3c3c42" stroke-width="0.25" text-anchor="middle" >8</text>
<text x="12.7" y="379.0" font-size="11.7" fill="#3c3c42" font-weight="normal" stroke="#3c3c42" stroke-width="0.25" text-anchor="middle" >9</text>
<text x="12.7" y="397.8" font-size="11.7" fill="#3c3c42" font-weight="normal" stroke="#3c3c42" stroke-width="0.25" text-anchor="middle" >10</text>
<text x="12.7" y="416.5" font-size="11.7" fill="#3c3c42" font-weight="normal" stroke="#3c3c42" stroke-width="0.25" text-anchor="middle" >11</text>
<text x="12.7" y="435.3" font-size="11.7" fill="#3c3c42" font-weight="normal" stroke="#3c3c42" stroke-width="0.25" text-anchor="middle" >12</text>
<text x="12.7" y="454.1" font-size="11.7" fill="#3c3c42" font-weight="normal" stroke="#3c3c42" stroke-width="0.25" text-anchor="middle" >13</text>
<text x="12.7" y="472.8" font-size="11.7" fill="#3c3c42" font-weight="normal" stroke="#3c3c42" stroke-width="0.25" text-anchor="middle" >14</text>
<text x="12.7" y="491.6" font-size="11.7" fill="#3c3c42" font-weight="normal" stroke="#3c3c42" stroke-width="0.25" text-anchor="middle" >15</text>
<text x="12.7" y="510.4" font-size="11.7" fill="#3c3c42" font-weight="normal" stroke="#3c3c42" stroke-width="0.25" text-anchor="middle" >16</text>
<text x="12.7" y="529.1" font-size="11.7" fill="#3c3c42" font-weight="normal" stroke="#3c3c42" stroke-width="0.25" text-anchor="middle" >17</text>
<text x="12.7" y="547.9" font-size="11.7" fill="#3c3c42" font-weight="normal" stroke="#3c3c42" stroke-width="0.25" text-anchor="middle" >18</text>
<text x="12.7" y="566.7" font-size="11.7" fill="#3c3c42" font-weight="normal" stroke="#3c3c42" stroke-width="0.25" text-anchor="middle" >19</text>
<rect x="26" y="227.1" width="142.4" height="1.3" fill="#3a3a3a"/>
<text x="29.8" y="222.8" font-size="15.7" fill="#16161c" font-weight="bold" stroke="#16161c" stroke-width="0.2" font-style="normal" textLength="37.2" lengthAdjust="spacingAndGlyphs" >FIND</text>
<text x="72.3" y="222.8" font-size="15.7" fill="#16161c" font-weight="bold" stroke="#16161c" stroke-width="0.2" font-style="normal" textLength="21.7" lengthAdjust="spacingAndGlyphs" >vs.</text>
<text x="98.2" y="222.8" font-size="15.7" fill="#16161c" font-weight="bold" stroke="#16161c" stroke-width="0.2" font-style="normal" textLength="62.5" lengthAdjust="spacingAndGlyphs" >SEARCH</text>
<text x="70.9" y="265.8" font-size="12" fill="#1c1c22" font-weight="bold" stroke="#1c1c22" stroke-width="0.15" font-style="normal" textLength="53.1" lengthAdjust="spacingAndGlyphs" >Function</text>
<rect x="70.9" y="267.7" width="53.1" height="1.1" fill="#222"/>
<text x="28.7" y="284.4" font-size="11.7" fill="#1c1c22" font-weight="normal" stroke="#1c1c22" stroke-width="0.2" font-style="normal" textLength="40.6" lengthAdjust="spacingAndGlyphs" >=FIND(</text>
<text x="70.8" y="284.4" font-size="11.7" fill="#1c1c22" font-weight="normal" stroke="#1c1c22" stroke-width="0.2" font-style="normal" textLength="18.4" lengthAdjust="spacingAndGlyphs" >&quot;s&quot;</text>
<text x="90.4" y="284.4" font-size="11.7" fill="#1c1c22" font-weight="normal" stroke="#1c1c22" stroke-width="0.2" font-style="normal" textLength="22.6" lengthAdjust="spacingAndGlyphs" >,B8,</text>
<text x="116.2" y="284.4" font-size="11.7" fill="#1c1c22" font-weight="normal" stroke="#1c1c22" stroke-width="0.2" font-style="normal" textLength="9.2" lengthAdjust="spacingAndGlyphs" >8)</text>
<rect x="167" y="289.74" width="4" height="17.57000000000004" fill="#fff"/>
<text x="28.7" y="303.3" font-size="11.7" fill="#1c1c22" font-weight="normal" stroke="#1c1c22" stroke-width="0.2" font-style="normal" textLength="57.8" lengthAdjust="spacingAndGlyphs" >=SEARCH(</text>
<text x="88" y="303.3" font-size="11.7" fill="#1c1c22" font-weight="normal" stroke="#1c1c22" stroke-width="0.2" font-style="normal" textLength="59.2" lengthAdjust="spacingAndGlyphs" >&quot;esy*isH&quot;</text>
<text x="148.2" y="303.3" font-size="11.7" fill="#1c1c22" font-weight="normal" stroke="#1c1c22" stroke-width="0.2" font-style="normal" textLength="22.6" lengthAdjust="spacingAndGlyphs" >,B8)</text>
<text x="328.7" y="265.8" font-size="12" fill="#1c1c22" font-weight="bold" stroke="#1c1c22" stroke-width="0.15" font-style="normal" textLength="38.8" lengthAdjust="spacingAndGlyphs" >Result</text>
<rect x="328.7" y="267.6" width="38.8" height="1.1" fill="#222"/>
<text x="390.6" y="284.7" font-size="11.9" fill="#1c1c22" font-weight="normal" stroke="#1c1c22" stroke-width="0.2" font-style="normal" textLength="14.0" lengthAdjust="spacingAndGlyphs" >17</text>
<rect x="287.3" y="288.3" width="120.3" height="19.7" fill="#fff" stroke="#217346" stroke-width="1.9"/>
<rect x="404.2" y="305" width="5.4" height="5.2" fill="#fff"/><rect x="405" y="305.8" width="4.4" height="4.2" fill="#217346"/>
<text x="290.3" y="303.1" font-size="11.7" fill="#1c1c22" font-weight="normal" stroke="#1c1c22" stroke-width="0.2" font-style="normal" textLength="57.8" lengthAdjust="spacingAndGlyphs" >=SEARCH(</text>
<text x="349.6" y="303.1" font-size="11.7" fill="#1c1c22" font-weight="normal" stroke="#1c1c22" stroke-width="0.2" font-style="normal" textLength="53.4" lengthAdjust="spacingAndGlyphs" >&quot;esy*isH</text>
<text x="171" y="360" font-size="11.7" fill="#1c1c22" font-weight="normal" stroke="#1c1c22" stroke-width="0.2" font-style="normal" textLength="109.2" lengthAdjust="spacingAndGlyphs" >Learnesy - English</text>
<rect x="299" y="311.6" width="246" height="16" fill="#000" opacity="0.07"/>
<rect x="298" y="310.6" width="245.6" height="15.5" fill="#fff" stroke="#c8c8c8" stroke-width="1"/>
<text x="303.4" y="321.2" font-size="11.3" fill="#74747c" font-weight="normal" stroke="#74747c" stroke-width="0.25" font-style="normal" textLength="48.7" lengthAdjust="spacingAndGlyphs" >SEARCH(</text>
<text x="352.6" y="321.2" font-size="11.3" fill="#464646" font-weight="bold" stroke="#464646" stroke-width="0.1" font-style="normal" textLength="48.7" lengthAdjust="spacingAndGlyphs" >find_text</text>
<text x="402.2" y="321.2" font-size="11.3" fill="#74747c" font-weight="normal" stroke="#74747c" stroke-width="0.25" font-style="normal" textLength="134.4" lengthAdjust="spacingAndGlyphs" >, within_text, [start_num])</text>
<path d="M570.6 279.4 V294.4 L573.9 291.5 L576.2 296.1 L578.7 294.9 L576.5 290.5 H581.5 Z" fill="#fbfbfb" stroke="#484848" stroke-width="1.2" stroke-linejoin="round"/>
<path d="M952.6 562.6 L956.4 559.8 L962.4 565.6 L959.6 568.8 Z" fill="#3f8a70"/>
<path d="M959.6 568.8 L962.4 565.6 L965.4 562.6 L968.2 565.6 L962.2 570.6 Z" fill="#5aa08a"/>
<path d="M965.4 562.6 L968.2 565.6 L965.2 568.2 L962.4 565.6 Z" fill="#8cc0ae"/>
<text x="973" y="568.8" font-size="10.6" fill="#5c5c5c" font-weight="bold" textLength="47.8" lengthAdjust="spacingAndGlyphs" letter-spacing="2.4">LEARNESY</text>
</svg>
</div>
</body>
</html>
